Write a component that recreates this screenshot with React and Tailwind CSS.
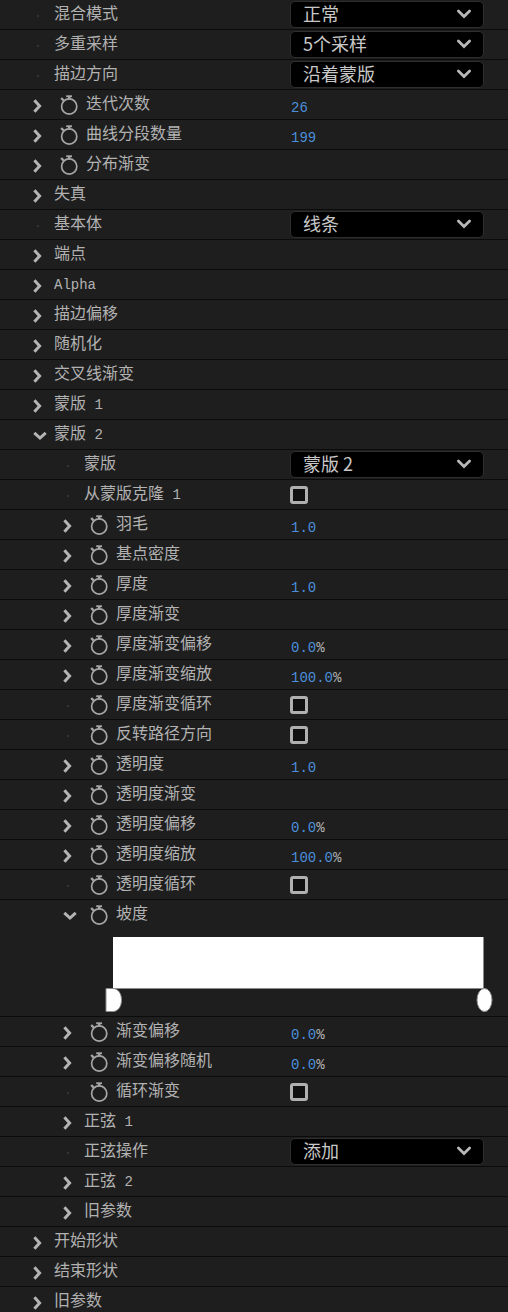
import { useState } from 'react';

const MASK = 'mask2';
const RAMP = 'ramp';

// toggle: true -> expandable, watch: can be keyframed
const ROWS = [
  { id: 'blend', label: '混合模式', options: ['正常', '相加', '屏幕'] },
  { id: 'samples', label: '多重采样', options: ['5个采样', '9个采样'] },
  { id: 'direction', label: '描边方向', options: ['沿着蒙版', '垂直蒙版'] },
  { id: 'iterations', label: '迭代次数', toggle: true, watch: true, value: '26' },
  { id: 'segments', label: '曲线分段数量', toggle: true, watch: true, value: '199' },
  { id: 'distribution', label: '分布渐变', toggle: true, watch: true },
  { id: 'distortion', label: '失真', toggle: true },
  { id: 'primitive', label: '基本体', options: ['线条', '圆形'] },
  { id: 'caps', label: '端点', toggle: true },
  { id: 'alpha', suffix: 'Alpha', toggle: true },
  { id: 'strokeOffset', label: '描边偏移', toggle: true },
  { id: 'randomize', label: '随机化', toggle: true },
  { id: 'cross', label: '交叉线渐变', toggle: true },
  { id: 'mask1', label: '蒙版', suffix: ' 1', toggle: true },
  { id: MASK, label: '蒙版', suffix: ' 2', toggle: true },
  { id: 'maskSelect', parent: MASK, label: '蒙版', options: ['蒙版 2', '蒙版 1'] },
  { id: 'clone', parent: MASK, label: '从蒙版克隆', suffix: ' 1', check: true },
  { id: 'feather', parent: MASK, label: '羽毛', toggle: true, watch: true, value: '1.0' },
  { id: 'density', parent: MASK, label: '基点密度', toggle: true, watch: true },
  { id: 'thick', parent: MASK, label: '厚度', toggle: true, watch: true, value: '1.0' },
  { id: 'thickRamp', parent: MASK, label: '厚度渐变', toggle: true, watch: true },
  { id: 'thickOffset', parent: MASK, label: '厚度渐变偏移', toggle: true, watch: true, value: '0.0', unit: '%' },
  { id: 'thickScale', parent: MASK, label: '厚度渐变缩放', toggle: true, watch: true, value: '100.0', unit: '%' },
  { id: 'thickLoop', parent: MASK, label: '厚度渐变循环', watch: true, check: true },
  { id: 'reverse', parent: MASK, label: '反转路径方向', watch: true, check: true },
  { id: 'opacity', parent: MASK, label: '透明度', toggle: true, watch: true, value: '1.0' },
  { id: 'opacityRamp', parent: MASK, label: '透明度渐变', toggle: true, watch: true },
  { id: 'opacityOffset', parent: MASK, label: '透明度偏移', toggle: true, watch: true, value: '0.0', unit: '%' },
  { id: 'opacityScale', parent: MASK, label: '透明度缩放', toggle: true, watch: true, value: '100.0', unit: '%' },
  { id: 'opacityLoop', parent: MASK, label: '透明度循环', watch: true, check: true },
  { id: RAMP, parent: MASK, label: '坡度', toggle: true, watch: true },
  { id: 'rampOffset', parent: MASK, label: '渐变偏移', toggle: true, watch: true, value: '0.0', unit: '%' },
  { id: 'rampRandom', parent: MASK, label: '渐变偏移随机', toggle: true, watch: true, value: '0.0', unit: '%' },
  { id: 'rampLoop', parent: MASK, label: '循环渐变', watch: true, check: true },
  { id: 'sine1', parent: MASK, label: '正弦', suffix: ' 1', toggle: true },
  { id: 'sineOp', parent: MASK, label: '正弦操作', options: ['添加', '相乘'] },
  { id: 'sine2', parent: MASK, label: '正弦', suffix: ' 2', toggle: true },
  { id: 'maskLegacy', parent: MASK, label: '旧参数', toggle: true },
  { id: 'startShape', label: '开始形状', toggle: true },
  { id: 'endShape', label: '结束形状', toggle: true },
  { id: 'legacy', label: '旧参数', toggle: true },
];

const Chevron = ({ open }) =>
  open ? (
    <svg width="14" height="10" viewBox="0 0 14 10" fill="none" stroke="currentColor" strokeWidth="3">
      <path d="M1.3 1.8 7 7l5.7-5.2" />
    </svg>
  ) : (
    <svg width="9" height="14" viewBox="0 0 9 14" fill="none" stroke="currentColor" strokeWidth="3">
      <path d="M1.4 1.2 6.6 7l-5.2 5.8" />
    </svg>
  );

const Stopwatch = () => (
  <svg width="18" height="20" viewBox="0 0 18 20" fill="none" stroke="currentColor">
    <circle cx="9.200" cy="11.500" r="7.600" strokeWidth="1.700" />
    <path d="M6.200 1.200h5.800" strokeWidth="1.800" />
    <path d="M9.200 1.500v3" strokeWidth="2.600" />
    <path d="M1.200 3 3.800 5.800" strokeWidth="2.400" />
  </svg>
);

const Dropdown = ({ id, options }) => (
  <div className="relative mt-px w-full">
    <select
      id={id}
      className="block h-[27px] w-full appearance-none rounded-[5px] border border-[#2e2e2e] bg-black pb-[3px] pl-3 pr-9 text-lg leading-[22px] text-[#c8c8c8] outline-none"
    >
      {options.map(option => (
        <option key={option}>{option}</option>
      ))}
    </select>
    <svg
      className="pointer-events-none absolute right-3 top-2 text-[#b8b8b8]"
      width="16"
      height="11"
      viewBox="0 0 16 11"
      fill="none"
      stroke="currentColor"
      strokeWidth="2.8"
      strokeLinecap="round"
    >
      <path d="M2.4 2 8 7.500 13.600 2" />
    </svg>
  </div>
);

const RampEditor = () => (
  <div className="pb-1 pt-2">
    <div className="ml-[113px] mr-6 h-[52px] border-b border-r border-[#8a8a8a] bg-white" />
    <div className="ml-[105px] mr-[15px] -mt-px flex justify-between">
      <button type="button" aria-label="起点色标">
        <svg width="17" height="24" viewBox="0 0 17 24" fill="#fff" stroke="#8c8c8c">
          <path d="M1 .5h7c5 0 8.500 5 8.500 11.500S13 23.500 8 23.500H1z" />
        </svg>
      </button>
      <button type="button" aria-label="终点色标">
        <svg width="17" height="24" viewBox="0 0 17 24" fill="#fff" stroke="#8c8c8c">
          <ellipse cx="8.500" cy="12" rx="7.500" ry="11.500" />
        </svg>
      </button>
    </div>
  </div>
);

const Row = ({ row, open, onToggle }) => {
  const { id, label, suffix, parent, toggle, watch, value, unit, check, options } = row;
  const Name = check || options ? 'label' : 'span';

  return (
    <div className="border-b border-[#0b0b0b]">
      <div className="grid h-[29px] grid-cols-[290px_1fr] items-start pr-6">
        <div className={parent ? 'flex pl-[60px]' : 'flex pl-[30px]'}>
          {toggle ? (
            <button
              type="button"
              aria-expanded={open}
              aria-label={`${label || ''}${suffix || ''}`}
              onClick={() => onToggle(id)}
              className="flex h-8 w-6 items-center pl-[3px] text-[#b4b4b4]"
            >
              <Chevron open={open} />
            </button>
          ) : (
            <span className="flex h-8 w-6 items-center pl-[7px]">
              <span className="size-[2px] rounded-full bg-[#3c3c3c]" />
            </span>
          )}
          {watch && (
            <button
              type="button"
              aria-label={`${label} 关键帧`}
              className="flex h-[29px] w-8 items-center pl-[6px] text-[#a6a6a6]"
            >
              <Stopwatch />
            </button>
          )}
          <Name htmlFor={Name === 'label' ? id : undefined} className="whitespace-pre text-base leading-6">
            {label}
            {suffix && <span className="font-['Liberation_Mono',monospace] text-sm">{suffix}</span>}
          </Name>
        </div>
        <div className="flex">
          {options && <Dropdown id={id} options={options} />}
          {check && (
            <input
              id={id}
              type="checkbox"
              className="mt-[6px] size-[18px] appearance-none rounded-[3px] border-3 border-[#b0b0b0] bg-[#111] checked:bg-[#4b91e2]"
            />
          )}
          {value && (
            <div className="pl-px pt-1 font-['Liberation_Mono',monospace] text-sm leading-7">
              <button type="button" className="text-[#4b8fdc]">
                {value}
              </button>
              {unit}
            </div>
          )}
        </div>
      </div>
      {id === RAMP && open && <RampEditor />}
    </div>
  );
};

export default function App() {
  const [opened, setOpened] = useState([MASK, RAMP]);

  const handleToggle = id => {
    setOpened(prev => (prev.includes(id) ? prev.filter(item => item !== id) : [...prev, id]));
  };

  return (
    <div className="h-screen overflow-hidden bg-[#1e1e1e] font-['Noto_Sans_CJK_SC',sans-serif] text-[#b2b2b2]">
      {ROWS.filter(row => !row.parent || opened.includes(row.parent)).map(row => (
        <Row key={row.id} row={row} open={opened.includes(row.id)} onToggle={handleToggle} />
      ))}
    </div>
  );
}
